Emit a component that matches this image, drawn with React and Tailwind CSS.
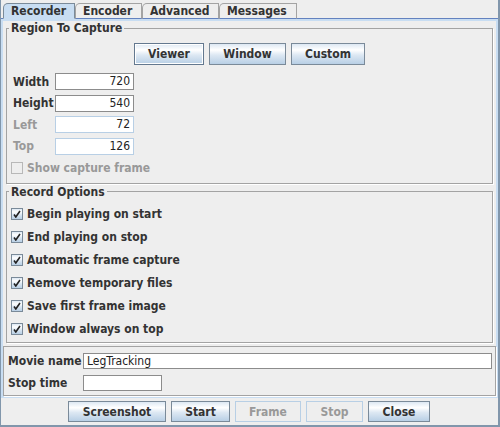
import React from "react";

const BTN_BG =
  "bg-[linear-gradient(to_bottom,#dde8f3_0%,#ffffff_30%,#dde8f3_55%,#b8cfe5_100%)]";

function Tab({ label, selected, w }) {
  return (
    <div
      className={`h-[16px] ${w} rounded-tl-[5px] border-t border-l border-r px-[7px] text-[12px] font-bold leading-[15px] text-[#333333] ${
        selected
          ? "border-[#7a8a99] bg-[#c8ddf2] border-b border-b-[#c8ddf2]"
          : "border-[#a3a3a3] bg-[#eeeeee] border-b border-b-[#6382bf]"
      }`}
    >
      {label}
    </div>
  );
}

function Button({ children, w, h = "h-[22px]", disabled, selected }) {
  let cls = "";
  if (disabled) cls = "border-[#b8cfe5] bg-[#eeeeee] text-[#999999]";
  else if (selected)
    cls = `border-[#63788f] ${BTN_BG} text-[#333333] shadow-[inset_0_0_0_1px_#ffffff]`;
  else cls = `border-[#7a8a99] ${BTN_BG} text-[#333333]`;
  return (
    <div
      className={`${w} ${h} border ${cls} flex items-center justify-center text-[12px] font-bold`}
    >
      {children}
    </div>
  );
}

function Field({ value, w, h = "h-[17px]", light, right }) {
  return (
    <div
      className={`${w} ${h} border ${
        light ? "border-[#b8cfe5]" : "border-[#8c8c8c]"
      } bg-white px-[3px] text-[12px] leading-[14px] text-[#222222] ${
        right ? "text-right" : "text-left"
      }`}
    >
      {value}
    </div>
  );
}

function Check({ label, checked = true, disabled }) {
  return (
    <div className="flex h-[12px] items-center gap-[4px]">
      <span
        className={`flex h-[12px] w-[12px] shrink-0 items-center justify-center border ${
          disabled
            ? "border-[#b8b8b8] bg-[#eeeeee]"
            : `border-[#7a8a99] ${BTN_BG}`
        }`}
      >
        {checked && (
          <svg width="8" height="8" viewBox="0 0 8 8">
            <path
              d="M1 4.5 L2.8 7 L7 1"
              fill="none"
              stroke="#222"
              strokeWidth="1.6"
            />
          </svg>
        )}
      </span>
      <span
        className={`whitespace-nowrap text-[12px] font-bold leading-[12px] ${
          disabled ? "text-[#999999]" : "text-[#333333]"
        }`}
      >
        {label}
      </span>
    </div>
  );
}

function Group({ title, className, children }) {
  return (
    <fieldset
      className={`border border-[#a3a3a3] shadow-[1px_1px_0_#ffffff] ${className}`}
    >
      <legend className="ml-[2px] px-[2px] text-[12px] font-bold leading-[14px] text-[#333333]">
        {title}
      </legend>
      {children}
    </fieldset>
  );
}

export default function App() {
  const rows = [
    ["Width", "720", false],
    ["Height", "540", false],
    ["Left", "72", true],
    ["Top", "126", true],
  ];
  const opts = [
    "Begin playing on start",
    "End playing on stop",
    "Automatic frame capture",
    "Remove temporary files",
    "Save first frame image",
    "Window always on top",
  ];

  return (
    <div className="flex h-[427px] w-[500px] flex-col border-l border-r-2 border-b-2 border-[#8196ab] bg-[#eeeeee] font-['DejaVu_Sans_Condensed','DejaVu_Sans',sans-serif] [font-stretch:condensed]">
      {/* tabs */}
      <div className="flex h-[19px] items-end">
        <div className="h-px w-[2px] bg-[#6382bf]" />
        <Tab label="Recorder" selected w="w-[72px]" />
        <Tab label="Encoder" w="w-[67px]" />
        <Tab label="Advanced" w="w-[77px]" />
        <Tab label="Messages" w="w-[78px]" />
        <div className="h-px flex-1 bg-[#6382bf]" />
      </div>

      {/* tab content */}
      <div className="flex h-[379px] flex-col border-x-2 border-b-2 border-t-2 border-[#c8ddf2]">
        <Group title="Region To Capture" className="mx-[3px] h-[163px]">
          <div className="mt-[8px] flex justify-center gap-[5px]">
            <Button w="w-[70px]" selected>
              Viewer
            </Button>
            <Button w="w-[77px]">Window</Button>
            <Button w="w-[74px]">Custom</Button>
          </div>
          <div className="mt-[8px] flex flex-col gap-[4.67px] pl-[6px]">
            {rows.map(([l, v, light]) => (
              <div key={l} className="flex h-[17px] items-center">
                <span
                  className={`w-[42px] text-[12px] font-bold leading-[14px] ${
                    light ? "text-[#999999]" : "text-[#333333]"
                  }`}
                >
                  {l}
                </span>
                <Field value={v} w="w-[79px]" light={light} right />
              </div>
            ))}
          </div>
          <div className="mt-[7px] pl-[4px]">
            <Check label="Show capture frame" checked={false} disabled />
          </div>
        </Group>

        <Group title="Record Options" className="mx-[3px] mt-px h-[159px]">
          <div className="mt-[9px] flex flex-col gap-[11px] pl-[4px]">
            {opts.map((o) => (
              <Check key={o} label={o} />
            ))}
          </div>
        </Group>

        <div className="mt-[3px] flex h-[50px] flex-col gap-[6px] border border-[#a3a3a3] pl-[4px] pr-[3px] pt-[6px] shadow-[1px_1px_0_#ffffff]">
          <div className="flex h-[16px] items-center">
            <span className="w-[75px] whitespace-nowrap text-[12px] font-bold leading-[14px] text-[#333333]">
              Movie name
            </span>
            <Field value="LegTracking" w="flex-1" h="h-[16px]" />
          </div>
          <div className="flex h-[16px] items-center">
            <span className="w-[75px] whitespace-nowrap text-[12px] font-bold leading-[14px] text-[#333333]">
              Stop time
            </span>
            <Field value="" w="w-[79px]" h="h-[16px]" />
          </div>
        </div>
      </div>

      {/* bottom buttons */}
      <div className="flex flex-1 items-center justify-center gap-[5px] pr-px">
        <Button w="w-[98px]" h="h-[21px]">
          Screenshot
        </Button>
        <Button w="w-[59px]" h="h-[21px]">
          Start
        </Button>
        <Button w="w-[66px]" h="h-[21px]" disabled>
          Frame
        </Button>
        <Button w="w-[57px]" h="h-[21px]" disabled>
          Stop
        </Button>
        <Button w="w-[62px]" h="h-[21px]">
          Close
        </Button>
      </div>
    </div>
  );
}
